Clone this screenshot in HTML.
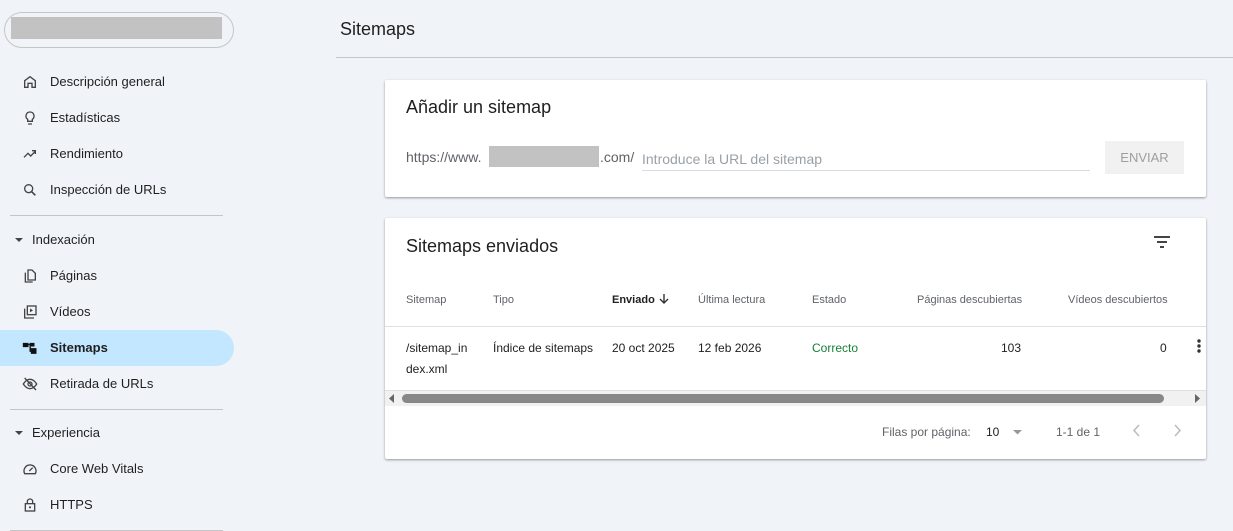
<!DOCTYPE html>
<html><head><meta charset="utf-8"><style>
*{margin:0;padding:0;box-sizing:border-box}
body{width:1233px;height:531px;background:#f0f4f9;font-family:"Liberation Sans",sans-serif;position:relative;overflow:hidden;color:#1f1f1f}
.a{position:absolute;white-space:nowrap}
.n{font-family:"Liberation Sans Narrow","Liberation Sans",sans-serif}
.nav{font-size:13px;color:#1f1f1f}
.nav .i{position:absolute;left:22px;width:16px;height:16px}
.card{position:absolute;background:#fff;border-radius:2px;box-shadow:0 1px 2px rgba(0,0,0,.3),0 1px 3px rgba(0,0,0,.1)}
.th{font-size:11px;color:#5f6368;top:294px}
.td{font-size:12px;color:#202124;top:341px}
</style></head><body>
<div class="a" style="left:4px;top:12px;width:230px;height:36px;border:1px solid #c4c7c5;border-radius:18px"></div>
<div class="a" style="left:11px;top:17px;width:211px;height:22px;background:#c2c2c2"></div>

<div class="nav">
<svg class="i" style="top:74px" viewBox="0 0 24 24"><path d="M4 20V10l8-6 8 6v10h-5v-6H9v6z" fill="none" stroke="#444" stroke-width="2"/></svg>
<div class="a" style="left:50px;top:74px">Descripción general</div>
<svg class="i" style="top:110px" viewBox="0 0 24 24"><path d="M9 21h6M12 3a6 6 0 0 0-3.5 10.9V17h7v-3.1A6 6 0 0 0 12 3z" fill="none" stroke="#444" stroke-width="2"/></svg>
<div class="a" style="left:50px;top:110px">Estadísticas</div>
<svg class="i" style="top:146px" viewBox="0 0 24 24"><path d="M3 17l6-6 4 4 7-7M15 7h5v5" fill="none" stroke="#444" stroke-width="2"/></svg>
<div class="a" style="left:50px;top:146px">Rendimiento</div>
<svg class="i" style="top:182px" viewBox="0 0 24 24"><circle cx="10" cy="10" r="6" fill="none" stroke="#444" stroke-width="2"/><path d="M14.5 14.5L20 20" stroke="#444" stroke-width="2.4"/></svg>
<div class="a" style="left:50px;top:182px">Inspección de URLs</div>
<div class="a" style="left:10px;top:215px;width:213px;height:1px;background:#c4c7c5"></div>
<svg class="a" style="left:15px;top:238px" width="8" height="5"><path d="M0 0h8L4 4z" fill="#444"/></svg>
<div class="a" style="left:32px;top:232px">Indexación</div>
<svg class="i" style="top:268px" viewBox="0 0 24 24"><path d="M9 3h6l5 5v10H9zM5 7v14h11" fill="none" stroke="#444" stroke-width="2"/></svg>
<div class="a" style="left:50px;top:268px">Páginas</div>
<svg class="i" style="top:304px" viewBox="0 0 24 24"><rect x="8" y="3" width="13" height="13" fill="none" stroke="#444" stroke-width="2"/><path d="M4 7v14h14" fill="none" stroke="#444" stroke-width="2"/><path d="M12 6.5v6l4.5-3z" fill="#444"/></svg>
<div class="a" style="left:50px;top:304px">Vídeos</div>
<div class="a" style="left:0;top:330px;width:234px;height:36px;background:#c2e7ff;border-radius:0 18px 18px 0"></div>
<svg class="i" style="top:340px" viewBox="0 0 24 24"><path d="M2 5h7v5H2zM12 5h6v4h-6zM14 13h7v7h-7zM9 7h4M12 7v10h3" fill="#111" stroke="#111" stroke-width="1.5"/></svg>
<div class="a" style="left:50px;top:340px;font-weight:bold">Sitemaps</div>
<svg class="i" style="top:376px" viewBox="0 0 24 24"><path d="M2 12s4-7 10-7 10 7 10 7-4 7-10 7S2 12 2 12z" fill="none" stroke="#444" stroke-width="2"/><circle cx="12" cy="12" r="3" fill="none" stroke="#444" stroke-width="2"/><path d="M4 3l17 18" stroke="#444" stroke-width="2"/></svg>
<div class="a" style="left:50px;top:376px">Retirada de URLs</div>
<div class="a" style="left:10px;top:409px;width:213px;height:1px;background:#c4c7c5"></div>
<svg class="a" style="left:15px;top:431px" width="8" height="5"><path d="M0 0h8L4 4z" fill="#444"/></svg>
<div class="a" style="left:32px;top:425px">Experiencia</div>
<svg class="i" style="top:461px" viewBox="0 0 24 24"><path d="M4 19a9 9 0 1 1 16 0z" fill="none" stroke="#444" stroke-width="2"/><path d="M11 15l5-5" stroke="#444" stroke-width="2"/></svg>
<div class="a" style="left:50px;top:461px">Core Web Vitals</div>
<svg class="i" style="top:497px" viewBox="0 0 24 24"><rect x="5" y="10" width="14" height="11" fill="none" stroke="#444" stroke-width="2"/><path d="M8 10V7a4 4 0 0 1 8 0v3" fill="none" stroke="#444" stroke-width="2"/><circle cx="12" cy="15.5" r="1.6" fill="#444"/></svg>
<div class="a" style="left:50px;top:497px">HTTPS</div>
<div class="a" style="left:10px;top:530px;width:213px;height:1px;background:#c4c7c5"></div>
</div>

<div class="a" style="left:340px;top:19px;font-size:18px;color:#1f1f1f">Sitemaps</div>
<div class="a" style="left:336px;top:57px;width:897px;height:1px;background:#c4c7c5"></div>

<div class="card" style="left:385px;top:80px;width:821px;height:117px"></div>
<div class="a n" style="left:406px;top:97px;font-size:18px">Añadir un sitemap</div>
<div class="a n" style="left:406px;top:149px;font-size:14px;color:#5f6368">https://www.</div>
<div class="a" style="left:489px;top:146px;width:110px;height:21px;background:#c2c2c2"></div>
<div class="a n" style="left:600px;top:149px;font-size:14px;color:#5f6368">.com/</div>
<div class="a n" style="left:642px;top:151px;font-size:14px;color:#9aa0a6">Introduce la URL del sitemap</div>
<div class="a" style="left:642px;top:170px;width:448px;height:1px;background:#dadce0"></div>
<div class="a n" style="left:1105px;top:141px;width:79px;height:33px;background:#f1f1f1;color:#9e9e9e;font-size:13px;text-align:center;line-height:33px">ENVIAR</div>

<div class="card" style="left:385px;top:218px;width:821px;height:241px"></div>
<div class="a n" style="left:406px;top:236px;font-size:18px">Sitemaps enviados</div>
<svg class="a" style="left:1153px;top:235px" width="18" height="14" viewBox="0 0 18 14"><path d="M1 2h16M4 7h10M7 12h4" stroke="#444" stroke-width="2"/></svg>
<div class="a n th" style="left:406px">Sitemap</div>
<div class="a n th" style="left:493px">Tipo</div>
<div class="a n th" style="left:612px;color:#202124;font-weight:bold">Enviado</div>
<svg class="a" style="left:658px;top:293px" width="12" height="12" viewBox="0 0 12 12"><path d="M6 1v9M2 6l4 4 4-4" fill="none" stroke="#333" stroke-width="1.4"/></svg>
<div class="a n th" style="left:698px">Última lectura</div>
<div class="a n th" style="left:812px">Estado</div>
<div class="a n th" style="left:917px">Páginas descubiertas</div>
<div class="a n th" style="left:1068px">Vídeos descubiertos</div>
<div class="a" style="left:385px;top:326px;width:821px;height:1px;background:#e0e0e0"></div>
<div class="a n td" style="left:406px">/sitemap_in</div>
<div class="a n td" style="left:406px;top:362px">dex.xml</div>
<div class="a n td" style="left:493px">Índice de sitemaps</div>
<div class="a n td" style="left:612px">20 oct 2025</div>
<div class="a n td" style="left:698px">12 feb 2026</div>
<div class="a n td" style="left:812px;color:#188038">Correcto</div>
<div class="a n td" style="left:1001px">103</div>
<div class="a n td" style="left:1160px">0</div>
<svg class="a" style="left:1196px;top:338px" width="6" height="16"><circle cx="3" cy="3" r="1.7" fill="#333"/><circle cx="3" cy="8" r="1.7" fill="#333"/><circle cx="3" cy="13" r="1.7" fill="#333"/></svg>
<div class="a" style="left:385px;top:390px;width:821px;height:1px;background:#e0e0e0"></div>
<div class="a" style="left:385px;top:391px;width:821px;height:15px;background:#f1f1f1"></div>
<div class="a" style="left:402px;top:394px;width:762px;height:9px;background:#888;border-radius:5px"></div>
<svg class="a" style="left:389px;top:394px" width="6" height="9"><path d="M5 0L0 4.5 5 9z" fill="#666"/></svg>
<svg class="a" style="left:1195px;top:394px" width="6" height="9"><path d="M0 0l5 4.5L0 9z" fill="#666"/></svg>
<div class="a n" style="left:882px;top:425px;font-size:12px;color:#5f6368">Filas por página:</div>
<div class="a n" style="left:986px;top:425px;font-size:12px;color:#202124">10</div>
<svg class="a" style="left:1013px;top:430px" width="9" height="5"><path d="M0 0h9L4.5 4.5z" fill="#999"/></svg>
<div class="a n" style="left:1056px;top:425px;font-size:12px;color:#5f6368">1-1 de 1</div>
<svg class="a" style="left:1133px;top:424px" width="8" height="13"><path d="M6 1L1 6.5 6 12" fill="none" stroke="#bbb" stroke-width="1.5"/></svg>
<svg class="a" style="left:1173px;top:424px" width="8" height="13"><path d="M2 1l5 5.5L2 12" fill="none" stroke="#bbb" stroke-width="1.5"/></svg>
</body></html>
